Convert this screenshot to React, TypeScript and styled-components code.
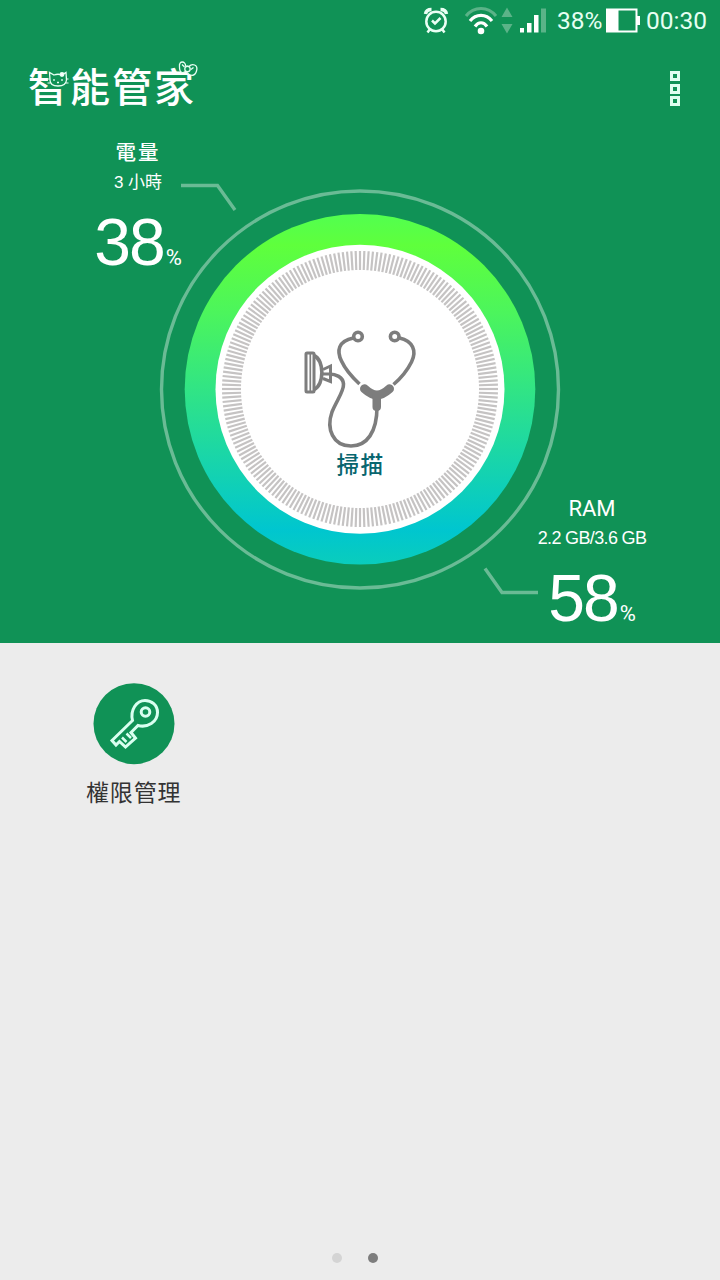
import React from 'react';
import styled, { createGlobalStyle } from 'styled-components';

const GlobalStyle = createGlobalStyle`
  * { box-sizing: border-box; }
  body { margin: 0; background: #ececec; }
`;

const sans = `'Liberation Sans', 'Noto Sans CJK TC', sans-serif`;
const narrow = `Roboto, 'Noto Sans CJK TC', sans-serif`;

const Screen = styled.div`
  width: 720px;
  height: 1280px;
  display: flex;
  flex-direction: column;
  background: #ececec;
  font-family: ${sans};
  white-space: nowrap;
  overflow: hidden;
`;

const Hero = styled.section`
  height: 643px;
  flex: none;
  display: flex;
  flex-direction: column;
  background: #109256;
  color: #fff;
`;

const StatusBar = styled.div`
  height: 42px;
  flex: none;
  display: flex;
  justify-content: flex-end;
  align-items: flex-start;
  padding-right: 13px;
`;

const StatusIcons = styled.svg`
  width: 128px;
  height: 42px;
  margin-right: 9px;
`;

const BatteryIcon = styled.svg`
  width: 36px;
  height: 42px;
  margin: 0 5px 0 1px;
`;

const StatusText = styled.div<{ $width: number }>`
  width: ${p => p.$width}px;
  font: 400 24.5px/41px ${narrow};
  color: #e6fff2;
`;

const TitleBar = styled.header`
  height: 96px;
  flex: none;
  display: flex;
  justify-content: space-between;
  padding: 0 39px 0 28px;
`;

const Title = styled.h1`
  position: relative;
  margin: 15px 0 0;
  font-size: 40px;
  font-weight: 500;
  line-height: 63px;
  letter-spacing: 2px;
`;

const TitleOrnaments = styled.svg`
  position: absolute;
  left: 0;
  top: -15px;
  width: 180px;
  height: 70px;
`;

const MenuButton = styled.button`
  width: 12px;
  height: 35px;
  margin-top: 29px;
  padding: 0;
  border: 0;
  background: none;
  display: flex;
  flex-direction: column;
  align-items: center;
  justify-content: space-between;
`;

const MenuSquare = styled.span`
  width: 10px;
  height: 10px;
  border: 3px solid #e0fff0;
`;

const Stage = styled.div`
  flex: 1;
  display: grid;
  grid-template-columns: 720px;
  grid-template-rows: 505px;
  > * { grid-area: 1 / 1; }
`;

const DialButton = styled.div`
  display: grid;
  justify-items: center;
  > * { grid-area: 1 / 1; }
`;

const DialArt = styled.svg`
  width: 720px;
  height: 505px;
`;

const DialLabel = styled.div`
  align-self: start;
  margin-top: 310px;
  padding-left: 1px;
  font-size: 22.5px;
  font-weight: 500;
  line-height: 36px;
  letter-spacing: 1.5px;
  color: #08666f;
`;

const Reading = styled.div<{ $side: 'left' | 'right' }>`
  width: 160px;
  display: flex;
  flex-direction: column;
  align-items: center;
  justify-self: ${p => (p.$side === 'left' ? 'start' : 'end')};
  margin: ${p => (p.$side === 'left' ? '0 0 0 58px' : '356px 48px 0 0')};
`;

const ReadingTitle = styled.div<{ $latin?: boolean }>`
  height: 28px;
  font-family: ${p => (p.$latin ? narrow : sans)};
  font-size: ${p => (p.$latin ? 22 : 20.5)}px;
  font-weight: ${p => (p.$latin ? 400 : 500)};
  line-height: 29px;
  letter-spacing: ${p => (p.$latin ? 0 : 2)}px;
`;

const ReadingDetail = styled.div<{ $latin?: boolean }>`
  height: 32px;
  font-size: ${p => (p.$latin ? 18 : 17)}px;
  line-height: ${p => (p.$latin ? 32 : 33)}px;
  letter-spacing: ${p => (p.$latin ? -0.65 : 0)}px;
`;

const ReadingValue = styled.div`
  display: flex;
  align-items: baseline;
  gap: 2px;
`;

const BigNumber = styled.span`
  font-size: 66px;
  line-height: 88px;
  letter-spacing: -2px;
`;

const Percent = styled.span`
  font: 400 22px/24px ${narrow};
`;

const Apps = styled.main`
  flex: 1;
  display: grid;
  grid-template-columns: repeat(3, 1fr);
  align-items: start;
  padding: 40px 8px 0 18px;
`;

const AppTile = styled.div`
  display: flex;
  flex-direction: column;
  align-items: center;
  gap: 10px;
`;

const AppIcon = styled.svg`
  width: 82px;
  height: 82px;
`;

const AppName = styled.div`
  font-size: 23px;
  line-height: 36px;
  letter-spacing: 0.8px;
  color: #333;
`;

const Pager = styled.nav`
  height: 45px;
  display: flex;
  justify-content: center;
  gap: 26px;
  padding: 18px 10px 0 0;
`;

const Dot = styled.span<{ $active?: boolean }>`
  width: 10px;
  height: 10px;
  border-radius: 50%;
  background: ${p => (p.$active ? '#7d7d7d' : '#d4d4d4')};
`;

const TICKS = Array.from({ length: 200 }, (_, i) => i * 1.8);

function Dial() {
  return (
    <DialArt viewBox="0 138 720 505" fill="none">
      <defs>
        <linearGradient id="ring" x1="0" y1="214" x2="0" y2="565" gradientUnits="userSpaceOnUse">
          <stop offset="0" stopColor="#52ff50" />
          <stop offset="0.09" stopColor="#5fff3c" />
          <stop offset="0.28" stopColor="#4cf55c" />
          <stop offset="0.9" stopColor="#00c6cf" />
          <stop offset="1" stopColor="#0acdbc" />
        </linearGradient>
      </defs>
      <circle cx="360" cy="389.500" r="198.500" stroke="#6abb95" strokeWidth="3.400" />
      <circle cx="360" cy="389.300" r="175.300" fill="url(#ring)" />
      <circle cx="360" cy="389.300" r="144.500" fill="#fff" />
      <g stroke="#c5c3c3" strokeWidth="2.200">
        {TICKS.map(a => (
          <path key={a} d="M360 251V270" transform={`rotate(${a} 360 389)`} />
        ))}
      </g>
      <path d="M181 185.500H217.500L235 210M485 568.500L502 592.500H538" stroke="#6abb95" strokeWidth="3.400" />
      <g stroke="#7d7d7d" strokeWidth="3.600">
        <circle cx="358" cy="336.500" r="4.300" />
        <circle cx="394.700" cy="336.500" r="4.300" />
        <path d="M353.500 338C338 341 336.500 351 341.500 361C346 371 352 377 359.500 384" />
        <path d="M399.500 338C413 341 417 351 411.500 362C407 371 400 379 393.500 384.500" />
        <path d="M377 407C377 432 367 446 351 446C333 446 326 429 332 412C337 400 344 391 343.500 384C343 377 336 374 329 374" />
        <path d="M314 355.500C324.500 360 324.500 385 314 389.500" />
        <path d="M323 369.500L330.500 366V381.500L323 378.500M322 374H330" strokeWidth="3" />
      </g>
      <rect x="306" y="353" width="8" height="39" rx="1" stroke="#7d7d7d" strokeWidth="3" />
      <path d="M310.300 353V392" stroke="#7d7d7d" strokeWidth="1.700" />
      <path d="M364.500 388.800C368 392 372 395 377 395C382 395 386 392 389.500 388.800" stroke="#7d7d7d" strokeWidth="9" strokeLinecap="round" />
      <path d="M372.500 394H381V407Q381 411 376.700 411Q372.500 411 372.500 407Z" fill="#7d7d7d" />
    </DialArt>
  );
}

export default function App() {
  return (
    <Screen>
      <GlobalStyle />
      <Hero>
        <StatusBar>
          <StatusIcons viewBox="420 0 128 42" fill="none">
            <g stroke="#eafff4" strokeWidth="2.500">
              <circle cx="436" cy="21.500" r="9.700" />
              <path d="M432 20.500L435 23.500L440.500 18" />
              <path d="M427.500 32.500L430 29M444.500 32.500L442 29" />
              <path d="M425.500 14C426 11 428.500 9.500 431.500 9.500M446.500 14C446 11 443.500 9.500 440.500 9.500" strokeWidth="3.500" />
            </g>
            <path d="M466 16C474 6 488 6 496 16" stroke="#5bb388" strokeWidth="3" />
            <g stroke="#fff" strokeWidth="3.200">
              <path d="M470 21C476 13.500 486 13.500 492 21" />
              <path d="M475 26.500C478.500 21.500 483.500 21.500 487 26.500" />
            </g>
            <circle cx="481" cy="31" r="3.300" fill="#fff" />
            <path d="M501.500 17L507 7.500L512.500 17ZM501.500 24L507 33.500L512.500 24Z" fill="#5bb388" />
            <path d="M520 28h4v4.500h-4zM527 23h4.500v9.500h-4.500zM534 15h4.500v17.500h-4.500z" fill="#fff" />
            <path d="M541 8.500h5v24h-5z" fill="#5bb388" />
          </StatusIcons>
          <StatusText $width={47}>38%</StatusText>
          <BatteryIcon viewBox="605 0 36 42">
            <path d="M606 8.500H637.500V32.500H606ZM608 10.500V30.500H635.500V10.500Z" fill="#fff" fillRule="evenodd" />
            <path d="M606 9H618.500V32H606ZM637 16H640V25H637Z" fill="#fff" />
          </BatteryIcon>
          <StatusText $width={61}>00:30</StatusText>
        </StatusBar>
        <TitleBar>
          <Title>
            智能管家
            <TitleOrnaments viewBox="28 42 180 70" fill="#109256" stroke="#e9fff4" strokeWidth="1.300">
              <rect x="48" y="68" width="19.500" height="18.500" stroke="none" />
              <path d="M50 80L49.500 72.500L54 75Q58 73.500 62 75L66 72.500L66.500 80Q66 86 58 86Q50 86 50 80Z" />
              <path d="M47.500 79h2M47.500 83h2.500M66.500 79h2M66 83h2.500" strokeWidth="1" />
              <path d="M54 79v2M62 79v2M57 82.500h2" />
              <circle cx="62" cy="74.500" r="1.800" fill="#fff" />
              <path d="M185.500 66C186 61 178.500 60 179.500 67C179.500 73 183 74 186 71C190 77 195 76.500 196.500 71C198.500 64.500 192 63 189 66.500Z" />
              <circle cx="187.500" cy="69" r="2.700" />
              <path d="M182 64.500l2.500 2.500M193.500 67.500l-2.500 2" />
            </TitleOrnaments>
          </Title>
          <MenuButton aria-label="menu"><MenuSquare /><MenuSquare /><MenuSquare /></MenuButton>
        </TitleBar>
        <Stage>
          <DialButton>
            <Dial />
            <DialLabel>掃描</DialLabel>
          </DialButton>
          <Reading $side="left">
            <ReadingTitle>電量</ReadingTitle>
            <ReadingDetail>3 小時</ReadingDetail>
            <ReadingValue>
              <BigNumber>38</BigNumber>
              <Percent>%</Percent>
            </ReadingValue>
          </Reading>
          <Reading $side="right">
            <ReadingTitle $latin>RAM</ReadingTitle>
            <ReadingDetail $latin>2.2 GB/3.6 GB</ReadingDetail>
            <ReadingValue>
              <BigNumber>58</BigNumber>
              <Percent>%</Percent>
            </ReadingValue>
          </Reading>
        </Stage>
      </Hero>
      <Apps>
        <AppTile>
          <AppIcon viewBox="92.500 683 82 82" fill="none">
            <circle cx="133.500" cy="723.700" r="40.500" fill="#109256" />
            <g stroke="#d9fff0" strokeWidth="3">
              <circle cx="145" cy="712" r="4.300" />
              <path d="M132 720.500L111.500 740.500L115.500 745L119 741.500L125 747L135 738L130.500 732.500L137.500 725.500C147 728 157 722 157 712.500C157 705 151 700.500 144.500 700.500C136 700.500 129.500 710 132 720.500Z" />
              <path d="M121.500 737.500L126 742M126 733.500L130.500 738" strokeWidth="2.500" />
            </g>
          </AppIcon>
          <AppName>權限管理</AppName>
        </AppTile>
      </Apps>
      <Pager><Dot /><Dot $active /></Pager>
    </Screen>
  );
}
